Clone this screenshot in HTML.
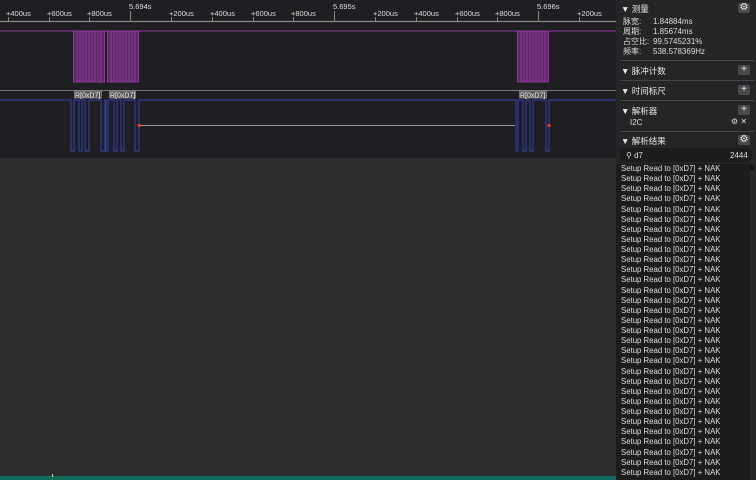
<!DOCTYPE html>
<html><head><meta charset="utf-8"><style>
body{margin:0;width:756px;height:480px;background:#2d2d2d;overflow:hidden;position:relative;font-family:"Liberation Sans","Noto Sans CJK SC",sans-serif}
#wave{position:absolute;left:0;top:0}
#side{position:absolute;left:616px;top:0;width:140px;height:480px;background:#252528;color:#ddd;font-size:8px}
.h{position:absolute;left:5px;font-size:8.5px;color:#e8e8e8}
.btn{position:absolute;left:122px;width:12px;height:10px;background:#4a4a4e;border-radius:2px;color:#eee;font-size:10px;line-height:10px;text-align:center}
.sep{position:absolute;left:4px;width:134px;height:1px;background:#444}
.list{position:absolute;left:0;top:164px;width:134px;height:316px;background:#1c1c1f}
.list div{height:10.13px;line-height:10px;padding-left:5px;font-size:7.8px;color:#ddd;white-space:nowrap}
</style></head><body>
<svg id="wave" width="616" height="480" xmlns="http://www.w3.org/2000/svg" font-family="Liberation Sans" font-size="7.5">
<rect x="0" y="0" width="616" height="158" fill="#1f1e22"/>
<line x1="0" y1="21.5" x2="616" y2="21.5" stroke="#888" stroke-width="1.2"/>
<g fill="#ddd">
<text x="6" y="16">+400us</text><text x="47" y="16">+600us</text><text x="87" y="16">+800us</text>
<text x="129" y="9">5.694s</text>
<text x="169" y="16">+200us</text><text x="210" y="16">+400us</text><text x="251" y="16">+600us</text><text x="291" y="16">+800us</text>
<text x="333" y="9">5.695s</text>
<text x="373" y="16">+200us</text><text x="414" y="16">+400us</text><text x="455" y="16">+600us</text><text x="495" y="16">+800us</text>
<text x="537" y="9">5.696s</text><text x="577" y="16">+200us</text>
</g>
<g stroke="#888">
<line x1="8.5" y1="17" x2="8.5" y2="21"/><line x1="49.5" y1="17" x2="49.5" y2="21"/><line x1="89.5" y1="17" x2="89.5" y2="21"/><line x1="130.5" y1="11" x2="130.5" y2="21"/>
<line x1="171.5" y1="17" x2="171.5" y2="21"/><line x1="212.5" y1="17" x2="212.5" y2="21"/><line x1="253.5" y1="17" x2="253.5" y2="21"/><line x1="293.5" y1="17" x2="293.5" y2="21"/><line x1="334.5" y1="11" x2="334.5" y2="21"/>
<line x1="375.5" y1="17" x2="375.5" y2="21"/><line x1="416.5" y1="17" x2="416.5" y2="21"/><line x1="457.5" y1="17" x2="457.5" y2="21"/><line x1="497.5" y1="17" x2="497.5" y2="21"/><line x1="538.5" y1="11" x2="538.5" y2="21"/><line x1="579.5" y1="17" x2="579.5" y2="21"/>
</g>
<line x1="0" y1="31" x2="616" y2="31" stroke="#8a3d96"/>
<g fill="#5a2a63" stroke="#a040b0" stroke-width="0.8">
<rect x="73.5" y="31" width="31" height="51"/><rect x="107.5" y="31" width="31" height="51"/><rect x="517.5" y="31" width="31" height="51"/>
</g>
<g stroke="#a040b0" stroke-width="0.8">
<path d="M77 31V82M80 31V82M83 31V82M86 31V82M89 31V82M92 31V82M95 31V82M98 31V82M101 31V82M111 31V82M114 31V82M117 31V82M120 31V82M123 31V82M126 31V82M129 31V82M132 31V82M135 31V82M521 31V82M524 31V82M527 31V82M530 31V82M533 31V82M536 31V82M539 31V82M542 31V82M545 31V82"/>
</g>
<line x1="0" y1="90.5" x2="616" y2="90.5" stroke="#777"/>
<g fill="#555" stroke="#999" stroke-width="0.6"><rect x="74.5" y="91" width="27" height="7"/><rect x="109.5" y="91" width="26" height="7"/><rect x="519.5" y="91" width="27" height="7"/></g>
<g fill="#eee" font-size="7"><text x="75" y="97.5">R[0xD7]</text><text x="110" y="97.5">R[0xD7]</text><text x="520" y="97.5">R[0xD7]</text></g>
<path d="M0 100H71V151H74V100H79V151H82V100H85V151H89V100H101V151H105V100H106V151H108V100H114V151H117V100H121V151H124V100H135V151H139V100H516V151H518V100H523V151H526V100H530V151H533V100H546V151H549V100H616" fill="none" stroke="#3340b0" stroke-width="1"/>
<line x1="140" y1="125.5" x2="515" y2="125.5" stroke="#999"/>
<rect x="137.5" y="124" width="3" height="3" fill="#f03030"/><rect x="547.5" y="124" width="3" height="3" fill="#f03030"/>
<rect x="0" y="476" width="616" height="4" fill="#0f6a5a"/>
<rect x="52" y="474" width="1" height="3" fill="#ccc"/>
</svg>
<div id="side">
<div class="h" style="top:3px">▼ 测量</div><div class="btn" style="top:3px">⚙</div>
<div style="position:absolute;left:7px;top:17px;line-height:10px;font-size:8px">脉宽:<br>周期:<br>占空比:<br>频率:</div>
<div style="position:absolute;left:37px;top:17px;line-height:10px;font-size:8px">1.84884ms<br>1.85674ms<br>99.5745231%<br>538.578369Hz</div>
<div class="sep" style="top:60px"></div>
<div class="h" style="top:65px">▼ 脉冲计数</div><div class="btn" style="top:65px">+</div>
<div class="sep" style="top:80px"></div>
<div class="h" style="top:85px">▼ 时间标尺</div><div class="btn" style="top:85px">+</div>
<div class="sep" style="top:100px"></div>
<div class="h" style="top:105px">▼ 解析器</div><div class="btn" style="top:105px">+</div>
<div style="position:absolute;left:14px;top:118px;font-size:8px">I2C</div>
<div style="position:absolute;left:115px;top:117px;font-size:8px">⚙ ✕</div>
<div class="sep" style="top:131px"></div>
<div class="h" style="top:135px">▼ 解析结果</div><div class="btn" style="top:135px">⚙</div>
<div style="position:absolute;left:4px;top:148px;width:132px;height:14px;background:#1c1c1f;border-radius:6px"></div>
<div style="position:absolute;left:10px;top:151px;font-size:8px">⚲ d7</div>
<div style="position:absolute;left:114px;top:151px;font-size:8px">2444</div>
<div class="list">
<div>Setup Read to [0xD7] + NAK</div><div>Setup Read to [0xD7] + NAK</div><div>Setup Read to [0xD7] + NAK</div><div>Setup Read to [0xD7] + NAK</div><div>Setup Read to [0xD7] + NAK</div><div>Setup Read to [0xD7] + NAK</div><div>Setup Read to [0xD7] + NAK</div><div>Setup Read to [0xD7] + NAK</div><div>Setup Read to [0xD7] + NAK</div><div>Setup Read to [0xD7] + NAK</div><div>Setup Read to [0xD7] + NAK</div><div>Setup Read to [0xD7] + NAK</div><div>Setup Read to [0xD7] + NAK</div><div>Setup Read to [0xD7] + NAK</div><div>Setup Read to [0xD7] + NAK</div><div>Setup Read to [0xD7] + NAK</div><div>Setup Read to [0xD7] + NAK</div><div>Setup Read to [0xD7] + NAK</div><div>Setup Read to [0xD7] + NAK</div><div>Setup Read to [0xD7] + NAK</div><div>Setup Read to [0xD7] + NAK</div><div>Setup Read to [0xD7] + NAK</div><div>Setup Read to [0xD7] + NAK</div><div>Setup Read to [0xD7] + NAK</div><div>Setup Read to [0xD7] + NAK</div><div>Setup Read to [0xD7] + NAK</div><div>Setup Read to [0xD7] + NAK</div><div>Setup Read to [0xD7] + NAK</div><div>Setup Read to [0xD7] + NAK</div><div>Setup Read to [0xD7] + NAK</div><div>Setup Read to [0xD7] + NAK</div>
</div>
<div style="position:absolute;left:134px;top:165px;width:4px;height:5px;background:#111;border-radius:2px"></div>
</div>
</body></html>
